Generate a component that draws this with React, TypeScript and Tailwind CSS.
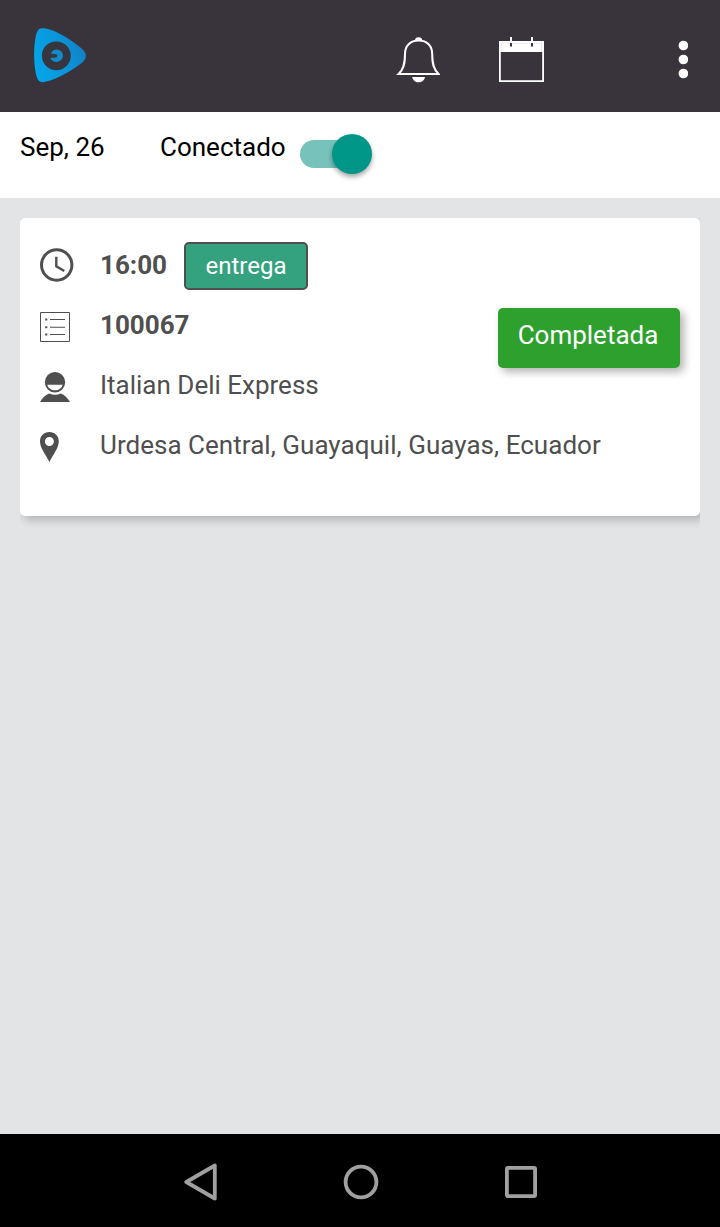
import { useState } from "react";
import type { ReactNode } from "react";

type Task = {
  time: string;
  kind: string;
  code: string;
  client: string;
  address: string;
  status: string;
};

const task: Task = {
  time: "16:00",
  kind: "entrega",
  code: "100067",
  client: "Italian Deli Express",
  address: "Urdesa Central, Guayaquil, Guayas, Ecuador",
  status: "Completada",
};

function Logo() {
  return (
    <svg width="54" height="56" viewBox="-0.6 -0.3 54 56">
      <defs>
        <linearGradient id="logoFill" x1="0" y1="0.7" x2="1" y2="0.4">
          <stop offset="0" stopColor="#04a6ea" />
          <stop offset="0.6" stopColor="#0a93d8" />
          <stop offset="1" stopColor="#1480c2" />
        </linearGradient>
      </defs>
      <path
        d="M8 1C14-.3 29 6 44 18C55 26 55 31 45 38C33 47 18 54 9 55C5 55 3 51 2 45C0 34 0 20 2 10C3 4 5 1 8 1Z"
        fill="url(#logoFill)"
      />
      <circle cx="22.7" cy="28.5" r="14.4" fill="#37363f" />
      <path
        d="M17.3 26.2C18.5 23.5 20.5 22.2 23.2 22.2A6.2 6.2 0 0 1 23.2 34.6C20.3 34.6 18 33.2 16.6 30.6L22.6 30.2C24 30 24 27.2 22.6 27Z"
        fill="#128bcb"
      />
    </svg>
  );
}

function BellIcon() {
  return (
    <svg width="44" height="46" viewBox="-0.6 0 44 46" fill="none">
      <path
        d="M22 3.6C13.5 3.6 8.4 9 8.4 17C8.4 27 7 32.5 2 37H42C37 32.5 35.6 27 35.6 17C35.6 9 30.5 3.6 22 3.6Z"
        stroke="#fff"
        strokeWidth="2"
      />
      <path d="M18.4 3.6A3.6 3.4 0 0 1 25.6 3.6Z" fill="#fff" />
      <path d="M15.6 40H28.4C27.8 43.3 25.2 45.3 22 45.3S16.2 43.3 15.6 40Z" fill="#fff" />
    </svg>
  );
}

function CalendarIcon() {
  return (
    <svg width="45" height="46" viewBox="0 0 45 46" fill="none">
      <path d="M.9 4.9H44.1V44.1H.9Z" stroke="#fff" strokeWidth="1.8" />
      <path d="M1 5H44V15H1Z" fill="#fff" />
      <path d="M2.5 14V6.3H42.5V14" stroke="#dcdbde" strokeWidth=".6" />
      <path d="M12 0V5M33 0V5" stroke="#fff" strokeWidth="2" />
      <path d="M12 6V9.5M33 6V9.5" stroke="#39343c" strokeWidth="2" />
    </svg>
  );
}

function MoreIcon() {
  return (
    <svg width="10" height="39" viewBox="-0.4 -0.5 10 39" fill="#fff">
      <circle cx="5" cy="5" r="4.8" />
      <circle cx="5" cy="19" r="4.8" />
      <circle cx="5" cy="33" r="4.8" />
    </svg>
  );
}

function ClockIcon() {
  return (
    <svg width="34" height="34" viewBox="0 0 34 34" fill="none" stroke="#4f4f4f">
      <circle cx="16.7" cy="17" r="15.2" strokeWidth="3" />
      <path d="M16.3 8.7V18.2L24.3 23" strokeWidth="2.4" />
    </svg>
  );
}

function ListIcon() {
  return (
    <svg width="30" height="30" viewBox="0 0 30 30" fill="none" stroke="#4f4f4f">
      <path d="M.5 .5H29.5V29.5H.5Z" />
      <path d="M10 7.5H25M10 15.3H25M10 22.5H25" strokeWidth="1.1" />
      <path d="M5.2 7.5H7.3M5.2 15.3H7.3M5.2 22.5H7.3" strokeWidth="2.1" />
    </svg>
  );
}

function PersonIcon() {
  return (
    <svg width="30" height="30" viewBox="0 0 30 30" fill="#4f4f4f">
      <path
        fillRule="evenodd"
        d="M15 0A10.2 10.2 0 1 1 15 20.4A10.2 10.2 0 0 1 15 0ZM7.3 12.8C8.3 16.4 11.3 18.3 15 18.3S21.7 16.4 22.7 12.8Z"
      />
      <path d="M0 30C2.2 26 5.5 22.6 9.3 21.5C13 23.3 17 23.3 20.7 21.5C24.5 22.6 27.8 26 30 30Z" />
    </svg>
  );
}

function PinIcon() {
  return (
    <svg width="19" height="30" viewBox="0 0 19 30" fill="#4f4f4f">
      <path
        fillRule="evenodd"
        d="M9.4 0C14.8 0 18.8 4 18.8 9.3C18.8 16 13.5 22 9.4 30C5.3 22 0 16 0 9.3C0 4 4 0 9.4 0ZM9.4 5A4.5 4.5 0 1 0 9.4 14A4.5 4.5 0 1 0 9.4 5Z"
      />
    </svg>
  );
}

function Row({ icon, children }: { icon: ReactNode; children: ReactNode }) {
  return (
    <div className="flex h-[60px] items-start">
      <div className="w-[60px] shrink-0 pt-[17px]">{icon}</div>
      {children}
    </div>
  );
}

export default function App() {
  const [online, setOnline] = useState(true);

  return (
    <div className="flex h-[1227px] w-[720px] flex-col overflow-hidden bg-[#e2e4e5] font-[Roboto,sans-serif] text-[26px] leading-[30px]">
      {/* App bar */}
      <header className="flex h-28 shrink-0 items-start bg-[#39343c] pr-8 pl-[33px]">
        <div className="pt-[27px]">
          <Logo />
        </div>
        <button className="ml-auto pt-[37px]">
          <BellIcon />
        </button>
        <button className="ml-[59px] pt-[37px]">
          <CalendarIcon />
        </button>
        <button className="ml-[134px] pt-10">
          <MoreIcon />
        </button>
      </header>

      {/* Date and connection */}
      <div className="flex h-[86px] shrink-0 items-start bg-white px-5 pt-5 text-black">
        <p className="w-[140px]">Sep, 26</p>
        <p className="w-[140px]">Conectado</p>
        <button
          role="switch"
          aria-checked={online}
          onClick={() => setOnline(!online)}
          className={`mt-2 flex h-7 w-[72px] items-center rounded-full ${
            online
              ? "justify-end bg-linear-to-r from-[#77c3bb] from-85% to-transparent to-85%"
              : "justify-start bg-gray-300"
          }`}
        >
          <span className="size-10 rounded-full bg-[#009688] shadow-[0_3px_5px_rgba(0,0,0,0.35)]" />
        </button>
      </div>

      {/* Task */}
      <main className="flex-1 p-5 text-[#4f4f4f]">
        <div className="h-[298px] rounded-[5px] bg-white px-5 pt-[17px] shadow-[4px_4px_10px_rgba(0,0,0,0.22)] [clip-path:inset(0_0_-20px_0)]">
          <Row icon={<div className="-mt-1"><ClockIcon /></div>}>
            <p className="w-[84px] pt-[15px] font-bold">{task.time}</p>
            <span className="mt-[7px] h-12 w-[124px] rounded-[5px] border-2 border-[#4f4f4f] bg-[#34a27e] pt-[7px] text-center text-2xl leading-[30px] text-white">
              {task.kind}
            </span>
          </Row>
          <Row icon={<ListIcon />}>
            <p className="pt-[15px] font-bold">{task.code}</p>
            <button className="mt-[13px] ml-auto h-[60px] w-[182px] shrink-0 rounded-[5px] bg-[#2ea02e] pr-[2px] pb-[6px] text-white shadow-[4px_4px_8px_rgba(0,0,0,0.3)]">
              {task.status}
            </button>
          </Row>
          <Row icon={<PersonIcon />}>
            <p className="pt-[15px]">{task.client}</p>
          </Row>
          <Row icon={<PinIcon />}>
            <p className="pt-[15px] tracking-[0.03px]">{task.address}</p>
          </Row>
        </div>
      </main>

      {/* System navigation */}
      <nav className="flex h-[93px] shrink-0 items-center justify-center gap-[126px] bg-black pt-[3px]">
        <svg width="34" height="38" viewBox="-0.8 0 34 38" fill="none" stroke="#a0a0a0">
          <path d="M31 2.5V35.5L2.5 19Z" strokeWidth="3.8" strokeLinejoin="round" />
        </svg>
        <svg width="36" height="36" viewBox="0 0 36 36" fill="none" stroke="#a0a0a0">
          <circle cx="18" cy="18" r="15.4" strokeWidth="3.8" />
        </svg>
        <svg width="32" height="32" viewBox="0 0 32 32" fill="none" stroke="#a0a0a0">
          <rect x="1.9" y="1.9" width="28.2" height="28.2" rx="1" strokeWidth="3.8" />
        </svg>
      </nav>
    </div>
  );
}
